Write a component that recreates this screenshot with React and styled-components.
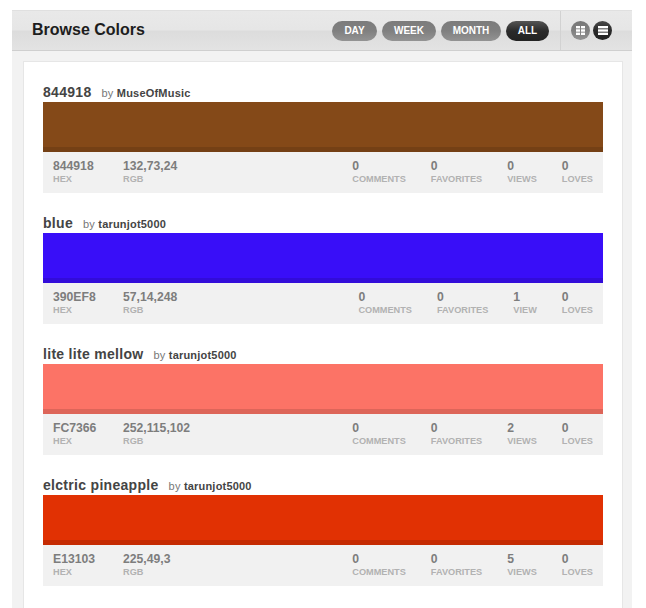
import React from 'react';
import styled, { createGlobalStyle } from 'styled-components';

const GlobalStyle = createGlobalStyle`
  html, body {
    margin: 0;
    padding: 0;
    background: #fff;
    font-family: "Liberation Sans", Arial, sans-serif;
    overflow: hidden;
  }
`;

const Page = styled.div`
  width: 620px;
  height: 598px;
  margin: 10px 0 0 12px;
  background: #f2f2f2;
  overflow: hidden;
`;

const Header = styled.div`
  height: 39px;
  display: flex;
  align-items: stretch;
  justify-content: space-between;
  border-top: 1px solid #e0e0e0;
  border-bottom: 1px solid #cfcfcf;
  background: linear-gradient(#e9e9e9 0%, #e6e6e6 48%, #dcdcdc 52%, #e3e3e3 100%);
`;

const Title = styled.h1`
  margin: 0 0 0 20px;
  font-size: 16px;
  line-height: 38px;
  font-weight: bold;
  color: #1d1d1d;
`;

const HeaderRight = styled.div`
  display: flex;
  align-items: center;
`;

const Filters = styled.div`
  display: flex;
  gap: 5px;
  padding-right: 11px;
`;

const Pill = styled.span`
  width: ${(p) => p.$w}px;
  height: 20px;
  border-radius: 10px;
  text-align: center;
  font-size: 10px;
  line-height: 19px;
  font-weight: bold;
  color: #fff;
  background: ${(p) =>
    p.$active
      ? 'linear-gradient(#555 0%, #2a2a2a 50%, #222 100%)'
      : 'linear-gradient(#7c7c7c 0%, #808080 50%, #939393 100%)'};
`;

const Views = styled.div`
  height: 39px;
  width: 72px;
  box-sizing: border-box;
  border-left: 1px solid #d2d2d2;
  padding-left: 10px;
  display: flex;
  align-items: center;
  gap: 3px;
`;

const ViewButton = styled.span`
  width: 19px;
  height: 19px;
  border-radius: 50%;
  display: flex;
  align-items: center;
  justify-content: center;
  background: ${(p) =>
    p.$active
      ? 'linear-gradient(#4a4a4a 0%, #2a2a2a 50%, #222 100%)'
      : 'linear-gradient(#777 0%, #808080 50%, #939393 100%)'};
`;

const Card = styled.div`
  margin: 10px 9px 0 11px;
  height: 560px;
  box-sizing: border-box;
  background: #fff;
  border: 1px solid #e6e6e6;
  padding: 19px 19px 0;
  display: flex;
  flex-direction: column;
  gap: 19px;
`;

const Item = styled.div`
  display: flex;
  flex-direction: column;
`;

const NameRow = styled.div`
  height: 21px;
  display: flex;
  align-items: baseline;
  line-height: 22px;
`;

const Name = styled.span`
  font-size: 14px;
  font-weight: bold;
  letter-spacing: 0.3px;
  color: #444;
  margin-right: 10px;
`;

const By = styled.span`
  font-size: 11px;
  letter-spacing: 0.2px;
  color: #777;

  b {
    color: #444;
  }
`;

const Swatch = styled.div`
  height: 45px;
  border-bottom: 5px solid rgba(0, 0, 0, 0.12);
  background: ${(p) => p.$color};
`;

const Stats = styled.div`
  height: 41px;
  box-sizing: border-box;
  padding: 8px 10px 0;
  background: #f1f1f1;
  display: flex;
  justify-content: space-between;
`;

const StatGroup = styled.div`
  display: flex;
  gap: ${(p) => p.$gap}px;
`;

const Stat = styled.div`
  min-width: ${(p) => p.$min || 0}px;
`;

const Value = styled.div`
  font-size: 12.2px;
  line-height: 13px;
  font-weight: bold;
  color: #7d7d7d;
`;

const Label = styled.div`
  font-size: 9.2px;
  line-height: 13px;
  font-weight: bold;
  color: #b2b2b2;
`;

const colors = [
  { name: '844918', by: 'MuseOfMusic', color: '#844918', hex: '844918', rgb: '132,73,24', views: 0 },
  { name: 'blue', by: 'tarunjot5000', color: '#390EF8', hex: '390EF8', rgb: '57,14,248', views: 1 },
  { name: 'lite lite mellow', by: 'tarunjot5000', color: '#FC7366', hex: 'FC7366', rgb: '252,115,102', views: 2 },
  { name: 'elctric pineapple', by: 'tarunjot5000', color: '#E13103', hex: 'E13103', rgb: '225,49,3', views: 5 },
];

const GridIcon = () => (
  <svg width="9" height="9" viewBox="0 0 9 9" fill="#fff">
    <rect x="0" y="0" width="4" height="2.4" />
    <rect x="5" y="0" width="4" height="2.4" />
    <rect x="0" y="3.3" width="4" height="2.4" />
    <rect x="5" y="3.3" width="4" height="2.4" />
    <rect x="0" y="6.6" width="4" height="2.4" />
    <rect x="5" y="6.6" width="4" height="2.4" />
  </svg>
);

const ListIcon = () => (
  <svg width="10" height="9" viewBox="0 0 10 9" fill="#fff">
    <rect x="0" y="0" width="10" height="2.4" />
    <rect x="0" y="3.3" width="10" height="2.4" />
    <rect x="0" y="6.6" width="10" height="2.4" />
  </svg>
);

const App = () => (
  <Page>
    <GlobalStyle />
    <Header>
      <Title>Browse Colors</Title>
      <HeaderRight>
        <Filters>
          <Pill $w={45}>DAY</Pill>
          <Pill $w={54}>WEEK</Pill>
          <Pill $w={60}>MONTH</Pill>
          <Pill $w={43} $active>ALL</Pill>
        </Filters>
        <Views>
          <ViewButton><GridIcon /></ViewButton>
          <ViewButton $active><ListIcon /></ViewButton>
        </Views>
      </HeaderRight>
    </Header>
    <Card>
      {colors.map((c) => (
        <Item key={c.hex}>
          <NameRow>
            <Name>{c.name}</Name>
            <By>by <b>{c.by}</b></By>
          </NameRow>
          <Swatch $color={c.color} />
          <Stats>
            <StatGroup $gap={0}>
              <Stat $min={70}><Value>{c.hex}</Value><Label>HEX</Label></Stat>
              <Stat><Value>{c.rgb}</Value><Label>RGB</Label></Stat>
            </StatGroup>
            <StatGroup $gap={25}>
              <Stat><Value>0</Value><Label>COMMENTS</Label></Stat>
              <Stat><Value>0</Value><Label>FAVORITES</Label></Stat>
              <Stat><Value>{c.views}</Value><Label>{c.views === 1 ? 'VIEW' : 'VIEWS'}</Label></Stat>
              <Stat><Value>0</Value><Label>LOVES</Label></Stat>
            </StatGroup>
          </Stats>
        </Item>
      ))}
    </Card>
  </Page>
);

export default App;
